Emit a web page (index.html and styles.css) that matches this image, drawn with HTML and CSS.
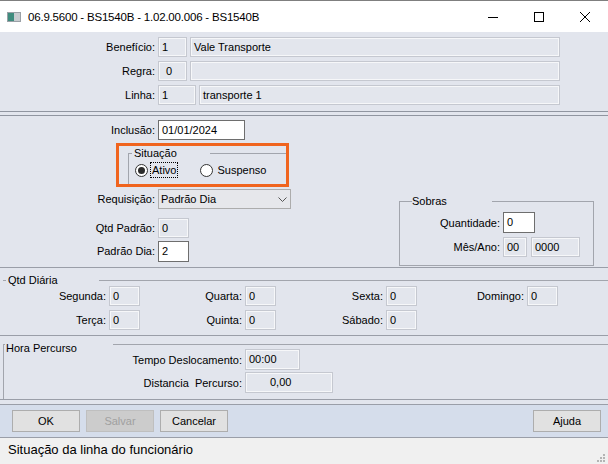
FILE: index.html
```html
<!DOCTYPE html>
<html lang="pt-BR">
<head>
    <meta charset="UTF-8">
    <title>BS1540B</title>
    <link rel="stylesheet" href="styles.css">
</head>
<body>
<div class="window">
    <div class="titlebar">
        <svg class="app-icon" width="14" height="10" viewBox="0 0 14 10">
            <rect x="0.5" y="0.5" width="13" height="9" fill="#c8ccd0" stroke="#9aa0a6"/>
            <rect x="1" y="1" width="6" height="8" fill="#3f8c7e"/>
        </svg>
        <span class="title">06.9.5600 - BS1540B - 1.02.00.006 - BS1540B</span>
        <div class="caption-buttons">
            <span class="cap-btn"><svg width="10" height="10" viewBox="0 0 10 10"><line x1="0" y1="5.5" x2="10" y2="5.5" stroke="#000"/></svg></span>
            <span class="cap-btn"><svg width="10" height="10" viewBox="0 0 10 10"><rect x="0.5" y="0.5" width="9" height="9" fill="none" stroke="#000"/></svg></span>
            <span class="cap-btn"><svg width="10" height="10" viewBox="0 0 10 10"><path d="M0 0L10 10M10 0L0 10" stroke="#000"/></svg></span>
        </div>
    </div>

    <div class="form">
        <div class="sec-top">
            <div class="row">
                <span class="lbl">Benefício:</span>
                <span class="fld ro w-cod">1</span>
                <span class="fld ro w-desc">Vale Transporte</span>
            </div>
            <div class="row">
                <span class="lbl">Regra:</span>
                <span class="fld ro w-cod center">0</span>
                <span class="fld ro w-desc"></span>
            </div>
            <div class="row">
                <span class="lbl">Linha:</span>
                <span class="fld ro w-linha">1</span>
                <span class="fld ro w-desc2">transporte 1</span>
            </div>
        </div>

        <div class="dsep"></div>

        <div class="sec-mid">
            <div class="mid-left">
                <div class="row">
                    <span class="lbl">Inclusão:</span>
                    <span class="fld edit w-date">01/01/2024</span>
                </div>
                <div class="highlight">
                    <fieldset class="situacao">
                        <legend>Situação</legend>
                        <div class="radios">
                            <span class="radio checked"></span>
                            <span class="radio-lbl focus">Ativo</span>
                            <span class="radio second"></span>
                            <span class="radio-lbl">Suspenso</span>
                        </div>
                    </fieldset>
                </div>
                <div class="row req">
                    <span class="lbl">Requisição:</span>
                    <span class="select">
                        <span>Padrão Dia</span>
                        <svg width="9" height="5" viewBox="0 0 9 5"><path d="M0.5 0.5L4.5 4.5L8.5 0.5" fill="none" stroke="#555"/></svg>
                    </span>
                </div>
                <div class="row qtd">
                    <span class="lbl">Qtd Padrão:</span>
                    <span class="fld ro w-num">0</span>
                </div>
                <div class="row pdia">
                    <span class="lbl">Padrão Dia:</span>
                    <span class="fld edit w-num">2</span>
                </div>
            </div>

            <fieldset class="sobras">
                <legend>Sobras</legend>
                <div class="row tall">
                    <span class="lbl">Quantidade:</span>
                    <span class="fld edit w-qtd">0</span>
                </div>
                <div class="row mes">
                    <span class="lbl">Mês/Ano:</span>
                    <span class="fld ro w-mes">00</span>
                    <span class="fld ro w-ano">0000</span>
                </div>
            </fieldset>
        </div>

        <div class="sep"></div>

        <fieldset class="diaria">
            <legend>Qtd Diária</legend>
            <div class="days">
                <span class="lbl">Segunda:</span><span class="fld ro">0</span>
                <span class="lbl">Quarta:</span><span class="fld ro">0</span>
                <span class="lbl">Sexta:</span><span class="fld ro">0</span>
                <span class="lbl">Domingo:</span><span class="fld ro">0</span>
                <span class="lbl">Terça:</span><span class="fld ro">0</span>
                <span class="lbl">Quinta:</span><span class="fld ro">0</span>
                <span class="lbl">Sábado:</span><span class="fld ro">0</span>
            </div>
        </fieldset>

        <div class="sep"></div>

        <fieldset class="hora">
            <legend>Hora Percurso</legend>
            <div class="row tall">
                <span class="lbl">Tempo Deslocamento:</span>
                <span class="fld ro w-tempo">00:00</span>
            </div>
            <div class="row tall dist">
                <span class="lbl">Distancia&nbsp; Percurso:</span>
                <span class="fld ro w-dist">0,00</span>
            </div>
        </fieldset>

        <div class="sep"></div>
    </div>

    <div class="buttonbar">
        <button class="btn">OK</button>
        <button class="btn" disabled>Salvar</button>
        <button class="btn">Cancelar</button>
        <button class="btn help">Ajuda</button>
    </div>

    <div class="statusbar">
        <span>Situação da linha do funcionário</span>
        <svg class="grip" width="9" height="9" viewBox="0 0 9 9">
            <rect x="6" y="0" width="2" height="2" fill="#b4b4b4"/>
            <rect x="3" y="3" width="2" height="2" fill="#b4b4b4"/>
            <rect x="6" y="3" width="2" height="2" fill="#b4b4b4"/>
            <rect x="0" y="6" width="2" height="2" fill="#b4b4b4"/>
            <rect x="3" y="6" width="2" height="2" fill="#b4b4b4"/>
            <rect x="6" y="6" width="2" height="2" fill="#b4b4b4"/>
        </svg>
    </div>
</div>
</body>
</html>
```

FILE: styles.css
```css
* {
    box-sizing: border-box;
}
body {
    margin: 0;
    padding: 0;
    font-family: "Liberation Sans", Arial, sans-serif;
    font-size: 11px;
    color: #000;
    background-color: #e2e5ed;
}
.window {
    width: 608px;
    height: 464px;
    display: flex;
    flex-direction: column;
    overflow: hidden;
}

/* title bar */
.titlebar {
    height: 32px;
    flex: none;
    background-color: #ffffff;
    border-top: 1px solid #7f7f7f;
    display: flex;
    align-items: center;
    padding-left: 7px;
}
.app-icon {
    margin-right: 7px;
}
.title {
    font-size: 11.5px;
    letter-spacing: -0.2px;
    color: #000;
}
.caption-buttons {
    margin-left: auto;
    display: flex;
}
.cap-btn {
    width: 46px;
    height: 30px;
    display: flex;
    align-items: center;
    justify-content: center;
}

/* form */
.form {
    flex: none;
    background-color: #e2e5ed;
    padding-bottom: 4px;
}
.row {
    display: flex;
    align-items: center;
    gap: 3px;
    height: 20px;
}
.row.tall {
    height: 21px;
}
.lbl {
    flex: none;
    text-align: right;
    white-space: nowrap;
}
.fld {
    flex: none;
    height: 20px;
    line-height: 18px;
    padding-left: 3px;
    border: 1px solid;
    white-space: nowrap;
    overflow: hidden;
}
.row.tall .fld {
    height: 21px;
    line-height: 19px;
}
.fld.ro {
    background-color: #e3e6ed;
    border-color: #c5c8d0;
    box-shadow: inset 0 0 0 1px #f6f7f9;
}
.fld.edit {
    background-color: #ffffff;
    border-color: #6e6e6e;
}
.fld.center {
    padding-left: 7px;
}

.sec-top {
    padding-top: 5px;
    display: flex;
    flex-direction: column;
    gap: 4px;
}
.sec-top .lbl,
.mid-left .lbl {
    width: 155px;
}
.w-cod { width: 29px; }
.w-desc { width: 370px; }
.w-linha { width: 38px; }
.w-desc2 { width: 361px; }
.w-date { width: 87px; }
.w-num { width: 31px; }
.w-qtd { width: 32px; }
.w-mes { width: 24px; }
.w-ano { width: 49px; margin-left: 1px; }
.w-tempo { width: 55px; }
.w-dist { width: 88px; padding-left: 24px; }

.dsep {
    margin-top: 6px;
    height: 5px;
    border-top: 1px solid #9095a0;
    border-bottom: 1px solid #9095a0;
}
.sep {
    height: 0;
    border-top: 1px solid #9a9ea8;
}

/* middle section */
.sec-mid {
    display: flex;
    padding-top: 4px;
}
.mid-left {
    width: 291px;
    flex: none;
    display: flex;
    flex-direction: column;
}
.highlight {
    margin-top: 3px;
    margin-left: 116px;
    width: 173px;
    height: 44px;
    border: 3px solid #f0641e;
    overflow: hidden;
}
fieldset {
    margin: 0;
    min-width: 0;
    border: 1px solid #a2a5ad;
}
legend {
    line-height: 13px;
}
.situacao {
    margin: 1px 0 0 9px;
    width: 220px;
    height: 60px;
    padding: 0 0 0 3px;
}
.situacao legend {
    padding: 0 33px 0 2px;
}
.radios {
    margin-top: 2px;
    height: 16px;
    display: flex;
    align-items: center;
}
.radio {
    width: 13px;
    height: 13px;
    border: 1px solid #333;
    border-radius: 50%;
    background-color: #ffffff;
    margin-left: 3px;
    display: flex;
    align-items: center;
    justify-content: center;
}
.radio.checked::after {
    content: "";
    width: 7px;
    height: 7px;
    border-radius: 50%;
    background-color: #2b2b2b;
}
.radio.second {
    margin-left: 22px;
}
.radio-lbl {
    margin-left: 2px;
    line-height: 14px;
    padding: 0 1px;
    border: 1px solid transparent;
}
.radio-lbl.focus {
    border: 1px dotted #000;
}
.select {
    width: 133px;
    height: 20px;
    flex: none;
    display: flex;
    align-items: center;
    justify-content: space-between;
    padding: 0 3px 0 2px;
    background-color: #e6e7eb;
    border: 1px solid #acacac;
}
.row.req { margin-top: 2px; }
.row.qtd { margin-top: 9px; }
.row.pdia { margin-top: 3px; }
.pdia .fld { height: 21px; }

.sobras {
    margin: 75px 0 0 108px;
    width: 195px;
    padding: 0 0 8px 12px;
}
.sobras legend {
    padding: 0 45px 0 0;
}
.sobras .row.tall {
    margin-top: 4px;
}
.sobras .lbl {
    width: 88px;
}
.sobras .row.mes {
    margin-top: 4px;
}
.sobras + .x {
    display: none;
}
.sec-mid + .sep {
    margin-top: 1px;
}

/* Qtd Diaria */
.diaria {
    margin: 6px 0 0 3px;
    border: none;
    border-top: 1px solid #a2a5ad;
    padding: 0 0 5px 3px;
}
.diaria legend {
    padding: 0 41px 0 2px;
}
.days {
    margin-top: -1px;
    display: grid;
    grid-template-columns: 103px 31px 105px 31px 110px 31px 110px 31px;
    grid-auto-rows: 20px;
    row-gap: 4px;
    align-items: center;
}
.days .lbl {
    padding-right: 3px;
}

/* Hora Percurso */
.hora {
    margin: -2px 0 0 3px;
    border: none;
    border-top: 1px solid #a2a5ad;
    border-left: 1px solid #a2a5ad;
    padding: 0 0 6px 1px;
}
.hora legend {
    padding: 8px 36px 0 1px;
}
.hora .row.tall {
    margin-top: -6px;
}
.hora .row.dist {
    margin-top: 2px;
}
.hora .lbl {
    width: 237px;
}

/* buttons */
.buttonbar {
    flex: none;
    height: 34px;
    background-color: #d5ddeb;
    border-top: 1px solid #9a9ea8;
    border-bottom: 1px solid #9a9ea8;
    display: flex;
    align-items: center;
    gap: 6px;
    padding: 0 7px 0 12px;
}
.btn {
    font-family: "Liberation Sans", Arial, sans-serif;
    font-size: 11px;
    width: 68px;
    height: 22px;
    padding: 0;
    background-color: #e1e1e1;
    border: 1px solid #adadad;
    color: #000;
}
.btn:disabled {
    background-color: #cccccc;
    border-color: #bfbfbf;
    color: #a0a0a0;
}
.btn.help {
    margin-left: auto;
}

/* status */
.statusbar {
    flex: 1;
    background-color: #f0f0f0;
    display: flex;
    align-items: flex-start;
    padding-left: 8px;
    font-size: 13px;
    line-height: 24px;
}
.grip {
    margin-left: auto;
    margin-right: 2px;
    align-self: flex-end;
    margin-bottom: 1px;
}
```
